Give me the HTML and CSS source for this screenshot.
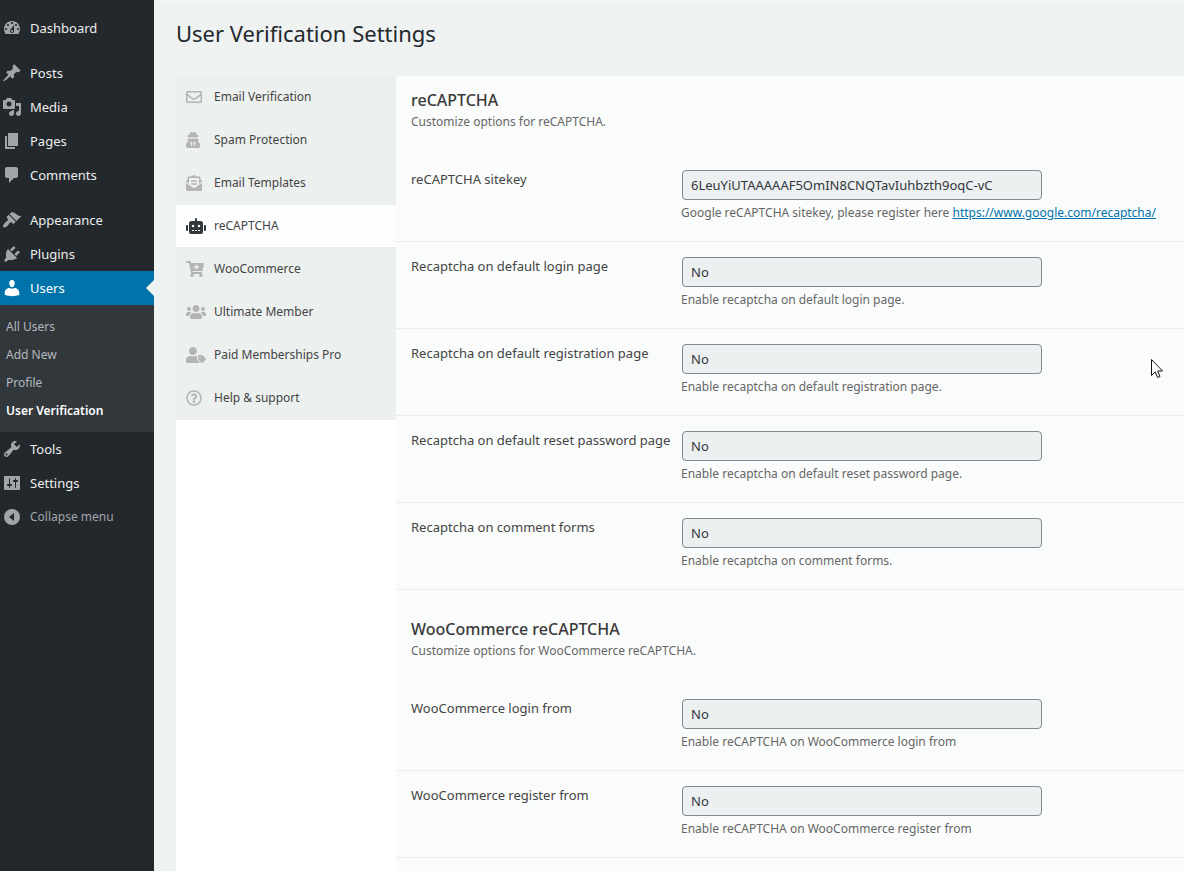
FILE: index.html
```html
<!DOCTYPE html>
<html lang="en">
<head>
<meta charset="utf-8">
<title>User Verification Settings</title>
<link rel="stylesheet" href="styles.css">
</head>
<body>
<div class="admin">
  <nav class="menu" aria-label="Main menu">
    <ul class="menu-group">
      <li><a class="menu-link" href="#"><svg class="menu-icon" viewBox="0 0 20 20"><path d="M3.76 16h12.48c1.1-1.37 1.76-3.11 1.76-5 0-4.42-3.58-8-8-8s-8 3.58-8 8c0 1.89.66 3.63 1.76 5zM10 4c.55 0 1 .45 1 1s-.45 1-1 1-1-.45-1-1 .45-1 1-1zM6 6c.55 0 1 .45 1 1s-.45 1-1 1-1-.45-1-1 .45-1 1-1zm8 0c.55 0 1 .45 1 1s-.45 1-1 1-1-.45-1-1 .45-1 1-1zm-5.37 5.55L12 7v6c0 1.1-.9 2-2 2s-2-.9-2-2c0-.57.24-1.08.63-1.45zM4 10c.55 0 1 .45 1 1s-.45 1-1 1-1-.45-1-1 .45-1 1-1zm12 0c.55 0 1 .45 1 1s-.45 1-1 1-1-.45-1-1 .45-1 1-1zm-5 3c0-.55-.45-1-1-1s-1 .45-1 1 .45 1 1 1 1-.45 1-1z"/></svg>Dashboard</a></li>
    </ul>
    <ul class="menu-group">
      <li><a class="menu-link" href="#"><svg class="menu-icon" viewBox="0 0 20 20"><path d="M10.44 3.02l1.82-1.82 6.36 6.35-1.83 1.82c-1.05-.68-2.48-.57-3.41.36l-.75.75c-.92.93-1.04 2.35-.35 3.41l-1.83 1.82-2.41-2.41-2.8 2.79c-.42.42-3.38 2.71-3.8 2.29s1.86-3.39 2.28-3.81l2.79-2.79L4.1 9.36l1.83-1.82c1.05.69 2.48.57 3.4-.36l.75-.75c.93-.92 1.05-2.35.36-3.41z"/></svg>Posts</a></li>
      <li><a class="menu-link" href="#"><svg class="menu-icon" viewBox="0 0 20 20"><path d="M13 11V4c0-.55-.45-1-1-1h-1.67L9 1H5L3.67 3H2c-.55 0-1 .45-1 1v7c0 .55.45 1 1 1h10c.55 0 1-.45 1-1zM7 4.5c1.38 0 2.5 1.12 2.5 2.5S8.38 9.5 7 9.5 4.5 8.38 4.5 7 5.62 4.5 7 4.5zM14 6h5v10.5c0 1.38-1.12 2.5-2.5 2.5S14 17.88 14 16.5s1.12-2.5 2.5-2.5c.17 0 .34.02.5.05V9h-3V6zm-4 8.05V13h2v3.5c0 1.38-1.12 2.5-2.5 2.5S7 17.88 7 16.5 8.12 14 9.5 14c.17 0 .34.02.5.05z"/></svg>Media</a></li>
      <li><a class="menu-link" href="#"><svg class="menu-icon" viewBox="0 0 20 20"><path d="M6 15V2h10v13H6zm-1 1h8v2H3V5h2v11z"/></svg>Pages</a></li>
      <li><a class="menu-link" href="#"><svg class="menu-icon" viewBox="0 0 20 20"><path d="M5 2h9c1.1 0 2 .9 2 2v7c0 1.1-.9 2-2 2h-2l-5 5v-5H5c-1.1 0-2-.9-2-2V4c0-1.1.9-2 2-2z"/></svg>Comments</a></li>
    </ul>
    <ul class="menu-group">
      <li><a class="menu-link" href="#"><svg class="menu-icon" viewBox="0 0 20 20"><path d="M14.48 11.06L7.41 3.99l1.5-1.5c.5-.56 2.3-.47 3.51.32 1.21.8 1.43 1.28 2.91 2.1 1.18.64 2.45 1.26 4.45.85zm-.71.71L6.7 4.7 4.93 6.47c-.39.39-.39 1.02 0 1.41l1.06 1.06c.39.39.39 1.03 0 1.42-.6.6-1.43 1.11-2.21 1.69-.35.26-.7.53-1.01.84C1.43 14.23.4 16.08 1.4 17.07c.99 1 2.84-.03 4.18-1.36.31-.31.58-.66.85-1.02.57-.78 1.08-1.61 1.69-2.21.39-.39 1.02-.39 1.41 0l1.06 1.06c.39.39 1.02.39 1.41 0z"/></svg>Appearance</a></li>
      <li><a class="menu-link" href="#"><svg class="menu-icon" viewBox="0 0 20 20"><path d="M13.11 4.36L9.87 7.6 8 5.73l3.24-3.24c.35-.34 1.05-.2 1.56.32.52.51.66 1.21.31 1.55zm-8 1.77l.91-1.12 9.01 9.01-1.19.84c-.71.71-2.63 1.16-3.82 1.16H6.14L4.9 17.26c-.59.59-1.54.59-2.12 0-.59-.58-.59-1.53 0-2.12l1.24-1.24v-3.88c0-1.13.4-3.19 1.09-3.89zm7.26 3.97l3.24-3.24c.34-.35 1.04-.21 1.55.31.52.51.66 1.21.31 1.55l-3.24 3.25z"/></svg>Plugins</a></li>
      <li>
        <a class="menu-link menu-link-current" href="#"><svg class="menu-icon" viewBox="0 0 20 20"><path d="M10 9.25c-2.27 0-2.73-3.44-2.73-3.44C7 4.02 7.82 2 9.97 2c2.16 0 2.98 2.02 2.71 3.81 0 0-.41 3.44-2.68 3.44zm0 1.6L12.72 10c2.39 0 4.52 2.33 4.52 4.53v2.49s-3.65 1.13-7.24 1.13c-3.65 0-7.24-1.13-7.24-1.13v-2.49c0-2.25 1.94-4.48 4.47-4.48z"/></svg>Users</a>
        <ul class="submenu">
          <li><a class="submenu-link" href="#">All Users</a></li>
          <li><a class="submenu-link" href="#">Add New</a></li>
          <li><a class="submenu-link" href="#">Profile</a></li>
          <li><a class="submenu-link submenu-link-current" href="#">User Verification</a></li>
        </ul>
      </li>
      <li><a class="menu-link" href="#"><svg class="menu-icon" viewBox="0 0 20 20"><path d="M16.68 9.77c-1.34 1.34-3.3 1.67-4.95.99l-5.41 6.52c-.99.99-2.59.99-3.58 0s-.99-2.59 0-3.57l6.52-5.42c-.68-1.65-.35-3.61.99-4.95 1.28-1.28 3.12-1.62 4.72-1.06l-2.89 2.89 2.82 2.82 2.86-2.87c.53 1.58.18 3.39-1.08 4.65zM3.81 16.21c.4.39 1.04.39 1.43 0 .4-.4.4-1.04 0-1.43-.39-.4-1.03-.4-1.43 0-.39.39-.39 1.03 0 1.43z"/></svg>Tools</a></li>
      <li><a class="menu-link" href="#"><svg class="menu-icon" viewBox="0 0 20 20"><path d="M18 16V4c0-.55-.45-1-1-1H3c-.55 0-1 .45-1 1v12c0 .55.45 1 1 1h14c.55 0 1-.45 1-1zM8 11h1c.55 0 1 .45 1 1s-.45 1-1 1H8v1.5c0 .28-.22.5-.5.5s-.5-.22-.5-.5V13H6c-.55 0-1-.45-1-1s.45-1 1-1h1V5.5c0-.28.22-.5.5-.5s.5.22.5.5V11zm5-2h-1c-.55 0-1-.45-1-1s.45-1 1-1h1V5.5c0-.28.22-.5.5-.5s.5.22.5.5V7h1c.55 0 1 .45 1 1s-.45 1-1 1h-1v5.5c0 .28-.22.5-.5.5s-.5-.22-.5-.5V9z"/></svg>Settings</a></li>
      <li><button class="menu-link menu-collapse" type="button"><svg class="menu-icon" viewBox="0 0 20 20"><path fill-rule="evenodd" d="M10 2a8 8 0 1 0 0 16 8 8 0 0 0 0-16zM12 6v8l-5-4z"/></svg>Collapse menu</button></li>
    </ul>
  </nav>

  <main class="content">
    <h1 class="page-title">User Verification Settings</h1>
    <div class="settings">
      <nav class="tabs" aria-label="Settings sections">
        <a class="tab" href="#"><span class="tab-icon"><svg viewBox="0 0 512 512"><path d="M464 64H48C21.49 64 0 85.49 0 112v288c0 26.51 21.49 48 48 48h416c26.51 0 48-21.49 48-48V112c0-26.51-21.49-48-48-48zm0 48v40.805c-22.422 18.259-58.168 46.651-134.587 106.49-16.841 13.247-50.201 45.072-73.413 44.701-23.208.375-56.579-31.459-73.413-44.701C106.18 199.465 70.425 171.067 48 152.805V112h416zM48 400V214.398c22.914 18.251 55.409 43.862 104.938 82.646 21.857 17.205 60.134 55.186 103.062 54.955 42.717.231 80.509-37.199 103.053-54.947 49.528-38.783 82.032-64.401 104.947-82.653V400H48z"/></svg></span>Email Verification</a>
        <a class="tab" href="#"><span class="tab-icon"><svg viewBox="0 0 448 512"><path d="M383.9 308.3l23.9-62.6c4-10.5-3.7-21.7-15-21.7h-58.5c11-18.9 17.8-40.6 17.8-64v-.3c39.2-7.8 64-19.1 64-31.7 0-13.3-27.3-25.1-70.1-33-9.2-32.8-27-65.8-40.6-82.8-9.5-11.9-25.9-15.6-39.5-8.8l-27.6 13.8c-9 4.5-19.6 4.5-28.6 0L182.1 3.4c-13.6-6.8-30-3.1-39.5 8.8-13.5 17-31.4 50-40.6 82.8-42.7 7.9-70 19.7-70 33 0 12.6 24.8 23.9 64 31.7v.3c0 23.4 6.8 45.1 17.8 64H56.3c-11.5 0-19.2 11.7-14.7 22.3l25.8 60.2C27.3 329.8 0 372.7 0 422.4v44.8C0 491.9 20.1 512 44.8 512h358.4c24.7 0 44.8-20.1 44.8-44.8v-44.8c0-48.4-25.8-90.4-64.1-114.1zM176 480l-41.6-192 49.6 32 24 40-32 120zm96 0l-32-120 24-40 49.6-32L272 480zm41.7-298.5c-3.9 11.9-7 24.6-16.5 33.4-10.1 9.3-48 22.4-64-25-2.8-8.4-15.4-8.4-18.3 0-17 50.2-56 32.4-64 25-9.5-8.8-12.7-21.5-16.5-33.4-.8-2.5-6.3-5.7-6.3-5.8v-10.8c28.3 3.6 61 5.8 96 5.8s67.7-2.1 96-5.8v10.8c-.1.1-5.6 3.2-6.4 5.8z"/></svg></span>Spam Protection</a>
        <a class="tab" href="#"><span class="tab-icon"><svg viewBox="0 0 512 512"><path d="M176 216h160c8.84 0 16-7.16 16-16v-16c0-8.84-7.16-16-16-16H176c-8.84 0-16 7.16-16 16v16c0 8.84 7.16 16 16 16zm-16 80c0 8.84 7.16 16 16 16h160c8.84 0 16-7.16 16-16v-16c0-8.84-7.16-16-16-16H176c-8.84 0-16 7.16-16 16v16zm96 121.13c-16.42 0-32.84-5.06-46.86-15.19L0 250.86V464c0 26.51 21.49 48 48 48h416c26.51 0 48-21.49 48-48V250.86L302.86 401.94c-14.02 10.12-30.44 15.19-46.86 15.19zm237.61-254.18c-8.85-6.94-17.24-13.47-29.61-22.81V96c0-26.51-21.49-48-48-48h-77.55c-3.04-2.2-5.87-4.26-9.04-6.56C312.6 29.17 279.2-.35 256 0c-23.2-.35-56.59 29.17-73.41 41.44-3.17 2.3-6 4.36-9.04 6.56H96c-26.51 0-48 21.49-48 48v44.14c-12.37 9.33-20.76 15.87-29.61 22.81A47.995 47.995 0 0 0 0 200.72v10.65l96 69.35V96h320v184.72l96-69.35v-10.65c0-14.74-6.78-28.67-18.39-37.77z"/></svg></span>Email Templates</a>
        <a class="tab tab-active" href="#" aria-current="page"><span class="tab-icon"><svg viewBox="0 0 640 512"><path d="M32,224H64V416H32A32,32,0,0,1,0,384V256A32,32,0,0,1,32,224Zm512-48V448a64,64,0,0,1-64,64H160a64,64,0,0,1-64-64V176a80,80,0,0,1,80-80H288V32a32,32,0,0,1,64,0V96H464A80,80,0,0,1,544,176ZM264,256a40,40,0,1,0-40,40A40,40,0,0,0,264,256Zm-8,128H192v32h64Zm96,0H288v32h64ZM456,256a40,40,0,1,0-40,40A40,40,0,0,0,456,256Zm-8,128H384v32h64ZM640,256V384a32,32,0,0,1-32,32H576V224h32A32,32,0,0,1,640,256Z"/></svg></span>reCAPTCHA</a>
        <a class="tab" href="#"><span class="tab-icon"><svg viewBox="0 0 576 512"><path d="M504.717 320H211.572l6.545 32h268.418c15.401 0 26.816 14.301 23.403 29.319l-5.517 24.276C523.112 414.668 536 433.828 536 456c0 31.202-25.519 56.444-56.824 55.994-29.823-.429-54.35-24.631-55.155-54.447-.44-16.287 6.085-31.049 16.803-41.548H231.176C241.553 426.165 248 440.326 248 456c0 31.813-26.528 57.431-58.67 55.938-28.54-1.325-51.751-24.385-53.251-52.917-1.158-22.034 10.436-41.455 28.051-51.586L93.883 64H24C10.745 64 0 53.255 0 40V24C0 10.745 10.745 0 24 0h102.529c11.401 0 21.228 8.021 23.513 19.19L159.208 64H551.99c15.401 0 26.816 14.301 23.403 29.319l-47.273 208C525.637 312.246 515.923 320 504.717 320zM408 168h-48v-40c0-8.837-7.163-16-16-16h-16c-8.837 0-16 7.163-16 16v40h-48c-8.837 0-16 7.163-16 16v16c0 8.837 7.163 16 16 16h48v40c0 8.837 7.163 16 16 16h16c8.837 0 16-7.163 16-16v-40h48c8.837 0 16-7.163 16-16v-16c0-8.837-7.163-16-16-16z"/></svg></span>WooCommerce</a>
        <a class="tab" href="#"><span class="tab-icon"><svg viewBox="0 0 640 512"><path d="M96 224c35.3 0 64-28.7 64-64s-28.7-64-64-64-64 28.7-64 64 28.7 64 64 64zm448 0c35.3 0 64-28.7 64-64s-28.7-64-64-64-64 28.7-64 64 28.7 64 64 64zm32 32h-64c-17.6 0-33.5 7.1-45.1 18.6 40.3 22.1 68.9 62 75.1 109.4h66c17.7 0 32-14.3 32-32v-32c0-35.3-28.7-64-64-64zm-256 0c61.9 0 112-50.1 112-112S381.9 32 320 32 208 82.1 208 144s50.1 112 112 112zm76.8 32h-8.3c-20.8 10-43.9 16-68.5 16s-47.6-6-68.5-16h-8.3C179.6 288 128 339.6 128 403.2V432c0 26.5 21.5 48 48 48h288c26.5 0 48-21.5 48-48v-28.8c0-63.6-51.6-115.2-115.2-115.2zm-223.7-13.4C161.5 263.1 145.6 256 128 256H64c-35.3 0-64 28.7-64 64v32c0 17.7 14.3 32 32 32h65.9c6.3-47.4 34.9-87.3 75.2-109.4z"/></svg></span>Ultimate Member</a>
        <a class="tab" href="#"><span class="tab-icon"><svg viewBox="0 0 640 512"><path d="M630.6 364.9l-90.3-90.2c-12-12-28.3-18.7-45.3-18.7h-79.3c-17.7 0-32 14.3-32 32v79.2c0 17 6.7 33.2 18.7 45.2l90.3 90.2c12.5 12.5 32.8 12.5 45.3 0l92.5-92.5c12.6-12.5 12.6-32.7.1-45.2zm-182.8-21c-13.3 0-24-10.7-24-24s10.7-24 24-24 24 10.7 24 24c0 13.2-10.7 24-24 24zm-223.8-88c70.7 0 128-57.3 128-128C352 57.3 294.7 0 224 0S96 57.3 96 128c0 70.6 57.3 127.9 128 127.9zm127.8 111.2V294c-12.2-3.6-24.9-6.2-38.2-6.2h-16.7c-22.2 10.2-46.9 16-72.9 16s-50.6-5.8-72.9-16h-16.7C60.2 287.9 0 348.1 0 422.3v41.6c0 26.5 21.5 48 48 48h352c15.5 0 29.1-7.5 37.9-18.9l-58-58c-18.1-18.1-28.1-42.2-28.1-67.9z"/></svg></span>Paid Memberships Pro</a>
        <a class="tab" href="#"><span class="tab-icon"><svg viewBox="0 0 512 512"><path d="M256 8C119.043 8 8 119.083 8 256c0 136.997 111.043 248 248 248s248-111.003 248-248C504 119.083 392.957 8 256 8zm0 448c-110.532 0-200-89.431-200-200 0-110.495 89.472-200 200-200 110.491 0 200 89.471 200 200 0 110.53-89.431 200-200 200zm107.244-255.2c0 67.052-72.421 68.084-72.421 92.863V300c0 6.627-5.373 12-12 12h-45.647c-6.627 0-12-5.373-12-12v-8.659c0-35.745 27.1-50.034 47.579-61.516 17.561-9.845 28.324-16.541 28.324-29.579 0-17.246-21.999-28.693-39.784-28.693-23.189 0-33.894 10.977-48.942 29.969-4.057 5.12-11.46 6.071-16.666 2.124l-27.824-21.098c-5.107-3.872-6.251-11.066-2.644-16.363C184.846 131.491 214.94 112 261.794 112c49.071 0 101.45 38.304 101.45 88.8zM298 368c0 23.159-18.841 42-42 42s-42-18.841-42-42 18.841-42 42-42 42 18.841 42 42z"/></svg></span>Help &amp; support</a>
      </nav>

      <form class="panel">
        <section class="section">
          <header class="section-head">
            <h2 class="section-title">reCAPTCHA</h2>
            <p class="section-desc">Customize options for reCAPTCHA.</p>
          </header>
          <div class="field">
            <label class="field-label" for="sitekey">reCAPTCHA sitekey</label>
            <div class="field-body">
              <input class="control" id="sitekey" type="text" value="6LeuYiUTAAAAAF5OmIN8CNQTavIuhbzth9oqC-vC">
              <p class="field-help">Google reCAPTCHA sitekey, please register here <a class="help-link" href="#">https://www.google.com/recaptcha/</a></p>
            </div>
          </div>
          <div class="field">
            <label class="field-label" for="login">Recaptcha on default login page</label>
            <div class="field-body">
              <select class="control" id="login"><option>No</option><option>Yes</option></select>
              <p class="field-help">Enable recaptcha on default login page.</p>
            </div>
          </div>
          <div class="field">
            <label class="field-label" for="registration">Recaptcha on default registration page</label>
            <div class="field-body">
              <select class="control" id="registration"><option>No</option><option>Yes</option></select>
              <p class="field-help">Enable recaptcha on default registration page.</p>
            </div>
          </div>
          <div class="field">
            <label class="field-label" for="reset">Recaptcha on default reset password page</label>
            <div class="field-body">
              <select class="control" id="reset"><option>No</option><option>Yes</option></select>
              <p class="field-help">Enable recaptcha on default reset password page.</p>
            </div>
          </div>
          <div class="field">
            <label class="field-label" for="comments">Recaptcha on comment forms</label>
            <div class="field-body">
              <select class="control" id="comments"><option>No</option><option>Yes</option></select>
              <p class="field-help">Enable recaptcha on comment forms.</p>
            </div>
          </div>
        </section>
        <section class="section">
          <header class="section-head">
            <h2 class="section-title">WooCommerce reCAPTCHA</h2>
            <p class="section-desc">Customize options for WooCommerce reCAPTCHA.</p>
          </header>
          <div class="field">
            <label class="field-label" for="woo-login">WooCommerce login from</label>
            <div class="field-body">
              <select class="control" id="woo-login"><option>No</option><option>Yes</option></select>
              <p class="field-help">Enable reCAPTCHA on WooCommerce login from</p>
            </div>
          </div>
          <div class="field">
            <label class="field-label" for="woo-register">WooCommerce register from</label>
            <div class="field-body">
              <select class="control" id="woo-register"><option>No</option><option>Yes</option></select>
              <p class="field-help">Enable reCAPTCHA on WooCommerce register from</p>
            </div>
          </div>
        </section>
      </form>
    </div>
  </main>
</div>
<svg class="pointer" viewBox="0 0 12 20" aria-hidden="true"><path d="M.5 .5v16l3.7-3.6 2.5 5.6 2.3-1-2.4-5.5h4.9z" fill="#fff" stroke="#111" stroke-linejoin="round"/></svg>
</body>
</html>
```

FILE: styles.css
```css
* {
  box-sizing: border-box;
}

body {
  margin: 0;
  background: #eef2f1;
  color: #444;
  font-family: "Segoe UI", "Noto Sans", "Open Sans", sans-serif;
  font-size: 13px;
  line-height: 20px;
}

ul {
  margin: 0;
  padding: 0;
  list-style: none;
}

svg {
  display: block;
  fill: currentColor;
}

.admin {
  display: flex;
  min-height: 100vh;
}

/* Left admin menu */

.menu {
  display: flex;
  flex: 0 0 154px;
  flex-direction: column;
  gap: 11px;
  padding-top: 11px;
  background: #23282d;
}

.menu-link {
  position: relative;
  display: flex;
  align-items: center;
  gap: 8px;
  width: 100%;
  height: 34px;
  padding: 0 2px;
  border: 0;
  background: none;
  color: #eee;
  font: inherit;
  text-align: left;
  text-decoration: none;
}

.menu-icon {
  width: 20px;
  height: 20px;
  color: #a0a5aa;
}

.menu-link-current {
  background: #0073aa;
  color: #fff;
}

.menu-link-current .menu-icon {
  color: #fff;
}

.menu-link-current::after {
  content: "";
  position: absolute;
  top: 9px;
  right: 0;
  border: 8px solid transparent;
  border-left-width: 0;
  border-right-color: #eef2f1;
}

.menu-collapse {
  color: #a0a5aa;
  font-size: 12px;
}

.submenu {
  padding: 8px 0 7px;
  background: #32373c;
}

.submenu-link {
  display: block;
  padding: 4px 6px;
  color: #b4b9be;
  font-size: 12px;
  text-decoration: none;
}

.submenu-link-current {
  color: #fff;
  font-weight: 600;
}

/* Page */

.content {
  display: flex;
  flex: 1;
  flex-direction: column;
  min-width: 0;
  padding-left: 22px;
  border-top: 3px solid #f3f4f2;
}

.page-title {
  margin: 0;
  padding: 14px 0 27px;
  color: #23282d;
  font-size: 22px;
  font-weight: 400;
  line-height: 32px;
}

.settings {
  display: flex;
  flex: 1;
  background: #fff;
}

.tabs {
  flex: 0 0 220px;
}

.tab {
  display: flex;
  align-items: center;
  gap: 8px;
  height: 43px;
  padding: 0 10px;
  border-bottom: 1px solid #e8ecea;
  background: #ecf0ef;
  color: #444;
  font-size: 12px;
  text-decoration: none;
}

.tab-icon {
  width: 20px;
  color: #b4b4b4;
}

.tab-icon svg {
  height: 16px;
}

.tab-active {
  background: #fdfdfd;
}

.tab-active .tab-icon {
  color: #32373c;
}

.panel {
  flex: 1;
  min-width: 0;
  background: #fafcfb;
}

.section + .section {
  padding-top: 15px;
}

.section-head {
  padding: 14px 15px 22px;
}

.section-title {
  margin: 0;
  color: #3a3a3a;
  font-size: 16px;
  font-weight: 500;
  line-height: 20px;
}

.section-desc {
  margin: 0;
  color: #666;
  font-size: 12px;
  line-height: 23px;
}

.field {
  display: flex;
  padding: 14px 15px;
  border-bottom: 1px solid #e9eeec;
}

.field-label {
  flex: 0 0 270px;
}

.field-body {
  flex: 1;
  min-width: 0;
}

.control {
  display: block;
  width: 100%;
  max-width: 360px;
  height: 30px;
  margin: 1px 0 0 1px;
  padding: 0 8px;
  border: 1px solid #7e8993;
  border-radius: 4px;
  appearance: none;
  background: #ecf0f0;
  color: #32373c;
  font: inherit;
}

.field-help {
  margin: 0;
  padding: 3px 0 4px;
  color: #666;
  font-size: 12px;
  white-space: nowrap;
}

.help-link {
  color: #0073aa;
}

.pointer {
  position: absolute;
  top: 359px;
  left: 1151px;
  width: 12px;
  height: 20px;
}
```
